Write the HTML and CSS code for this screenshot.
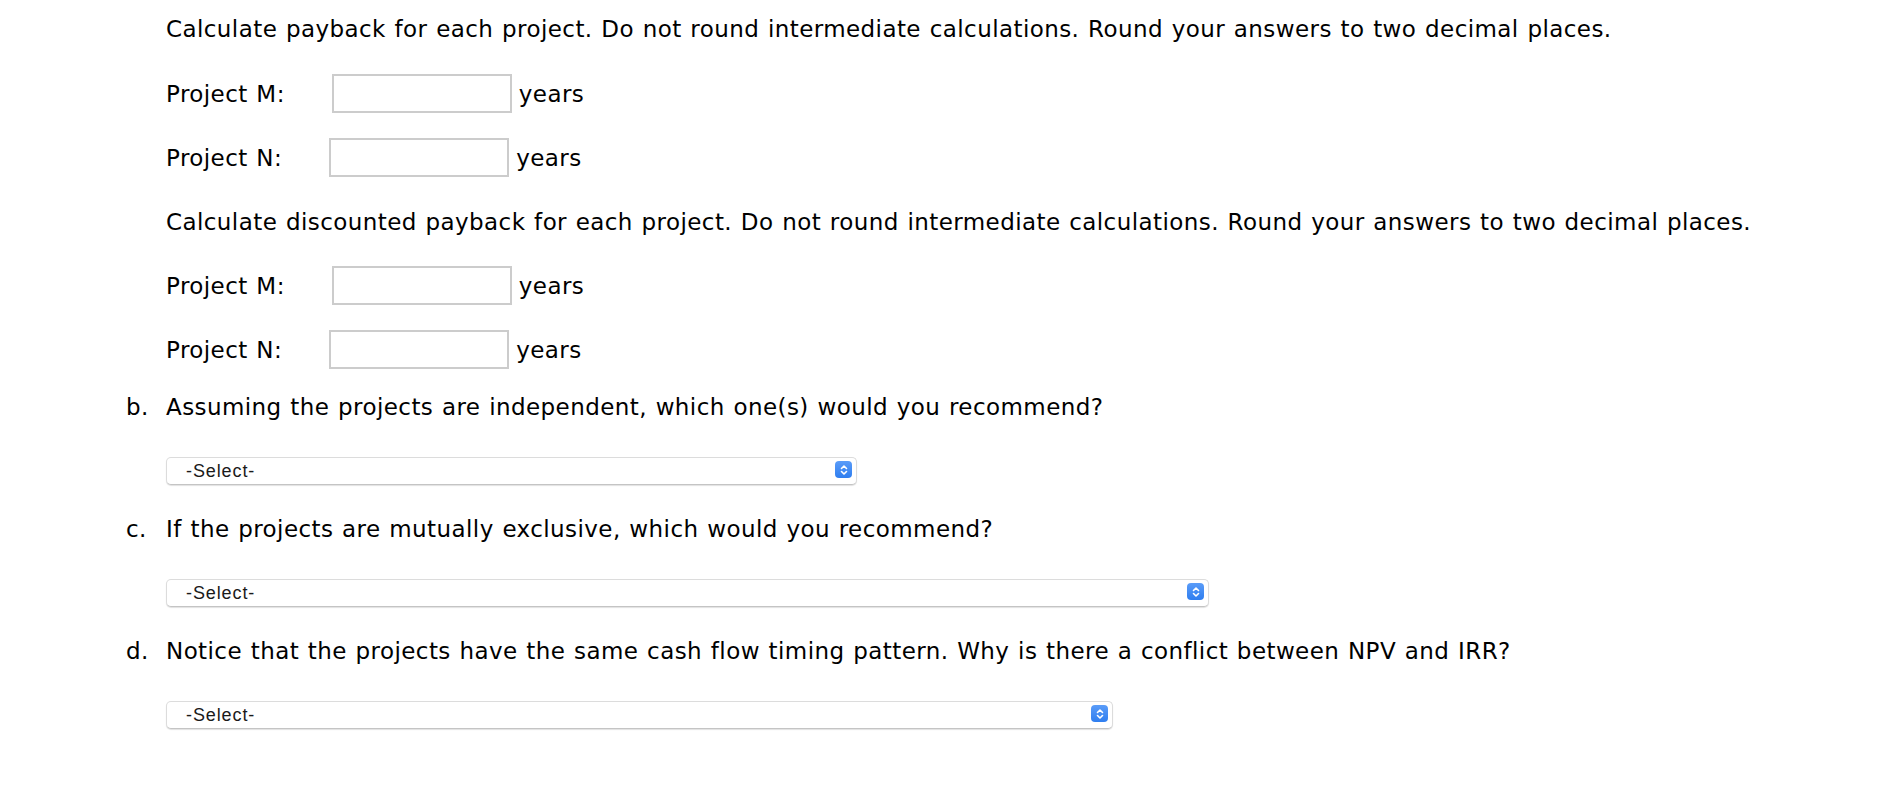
FILE: index.html
```html
<!DOCTYPE html>
<html>
<head>
<meta charset="utf-8">
<link rel="stylesheet" href="styles.css">
</head>
<body>
<div class="page">
  <div class="line indent">Calculate payback for each project. Do not round intermediate calculations. Round your answers to two decimal places.</div>
  <div class="row indent"><span class="lbl">Project M:</span><input class="num" type="text"><span class="unit">years</span></div>
  <div class="row indent"><span class="lbl">Project N:</span><input class="num" type="text"><span class="unit">years</span></div>
  <div class="row indent">Calculate discounted payback for each project. Do not round intermediate calculations. Round your answers to two decimal places.</div>
  <div class="row indent"><span class="lbl">Project M:</span><input class="num" type="text"><span class="unit">years</span></div>
  <div class="row indent"><span class="lbl">Project N:</span><input class="num" type="text"><span class="unit">years</span></div>

  <div class="q"><span class="mark">b.</span><span>Assuming the projects are independent, which one(s) would you recommend?</span></div>
  <div class="selwrap w1"><select class="sel"><option>-Select-</option></select><span class="btn"><svg width="10" height="12" viewBox="0 0 10 12"><path d="M2.5 4.5 L5 2 L7.5 4.5 M2.5 7.5 L5 10 L7.5 7.5" fill="none" stroke="#fff" stroke-width="1.6" stroke-linecap="round" stroke-linejoin="round"/></svg></span></div>

  <div class="q"><span class="mark">c.</span><span>If the projects are mutually exclusive, which would you recommend?</span></div>
  <div class="selwrap w2"><select class="sel"><option>-Select-</option></select><span class="btn"><svg width="10" height="12" viewBox="0 0 10 12"><path d="M2.5 4.5 L5 2 L7.5 4.5 M2.5 7.5 L5 10 L7.5 7.5" fill="none" stroke="#fff" stroke-width="1.6" stroke-linecap="round" stroke-linejoin="round"/></svg></span></div>

  <div class="q"><span class="mark">d.</span><span>Notice that the projects have the same cash flow timing pattern. Why is there a conflict between NPV and IRR?</span></div>
  <div class="selwrap w3"><select class="sel"><option>-Select-</option></select><span class="btn"><svg width="10" height="12" viewBox="0 0 10 12"><path d="M2.5 4.5 L5 2 L7.5 4.5 M2.5 7.5 L5 10 L7.5 7.5" fill="none" stroke="#fff" stroke-width="1.6" stroke-linecap="round" stroke-linejoin="round"/></svg></span></div>
</div>
</body>
</html>
```
FILE: styles.css
```css
html, body {
  margin: 0;
  padding: 0;
  background: #fff;
}
.page {
  font-family: "DejaVu Sans", Verdana, sans-serif;
  font-size: 23px;
  letter-spacing: 0.42px;
  word-spacing: 1px;
  color: #000;
  padding-top: 10px;
  padding-bottom: 20px;
  display: flex;
  flex-direction: column;
}
.line, .q {
  height: 38px;
  display: flex;
  align-items: center;
  white-space: nowrap;
}
.row {
  height: 39px;
  display: flex;
  align-items: center;
  white-space: nowrap;
  margin-top: 25px;
}
.line + .row {
  margin-top: 26px;
}
.indent {
  padding-left: 166px;
}
.lbl {
  margin-right: 47px;
}
.num {
  box-sizing: border-box;
  width: 180px;
  height: 39px;
  border: 2px solid #cccccc;
  border-radius: 0;
  margin: 0 7px 0 0;
  padding: 0 6px;
  font: inherit;
  outline: none;
  background: #fff;
}
.q {
  margin-top: 19px;
  padding-left: 126px;
}
.q ~ .q {
  margin-top: 26px;
}
.mark {
  width: 40px;
}
.selwrap {
  position: relative;
  margin-top: 30px;
  margin-left: 166px;
  height: 28px;
}
.w1 { width: 691px; }
.w2 { width: 1043px; }
.w3 { width: 947px; }
.sel {
  -webkit-appearance: none;
  appearance: none;
  box-sizing: border-box;
  width: 100%;
  height: 28px;
  margin: 0;
  border: 1px solid #dcdcdc;
  border-bottom-color: #c4c4c4;
  border-radius: 5px;
  box-shadow: 0 1px 1px rgba(0, 0, 0, 0.12);
  background: #fff;
  padding: 0 0 0 19px;
  font-family: "Liberation Sans", Arial, sans-serif;
  font-size: 18px;
  letter-spacing: 0.9px;
  word-spacing: 0;
  color: #1a1a1a;
  outline: none;
}
.btn {
  position: absolute;
  right: 5px;
  top: 5px;
  width: 17px;
  height: 17px;
  border-radius: 4px;
  background: linear-gradient(#5a9cf8, #2f7ef0);
  display: flex;
  align-items: center;
  justify-content: center;
  pointer-events: none;
}
```
